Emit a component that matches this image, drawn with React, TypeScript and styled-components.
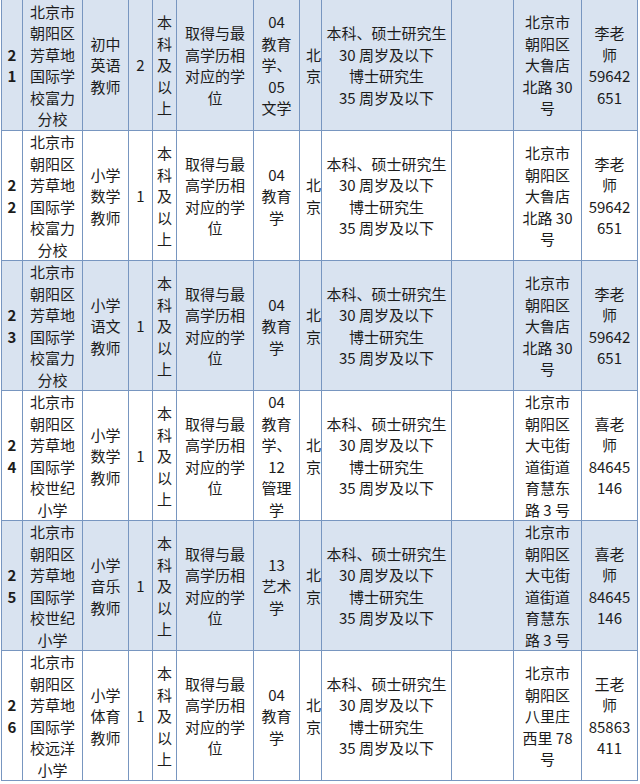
import styled, { createGlobalStyle } from 'styled-components'

const GlobalStyle = createGlobalStyle`
  html, body { margin: 0; padding: 0; background: #fff; }
  body { font-family: "Noto Sans CJK SC", "Noto Sans", sans-serif; color: #1c1c1c; }
`

const Page = styled.div`
  width: 640px;
  height: 784px;
  overflow: hidden;
  background: #fff;
`

const Table = styled.table`
  margin: -1px 0 0 1px;
  width: 637px;
  table-layout: fixed;
  border-collapse: collapse;
  font-size: 15px;
  line-height: 21.5px;
`

const Row = styled.tr<{ $shade: boolean }>`
  height: 129.3px;
  background: ${({ $shade }) => ($shade ? '#d9e3f0' : '#ffffff')};
  &:first-child { height: 131.3px; }
`

const Cell = styled.td<{ $bold?: boolean; $left?: boolean }>`
  border: 1px solid #7896c0;
  padding: 0;
  text-align: ${({ $left }) => ($left ? 'left' : 'center')};
  padding-left: ${({ $left }) => ($left ? '6px' : '0')};
  vertical-align: middle;
  font-weight: ${({ $bold }) => ($bold ? 700 : 400)};
  overflow: hidden;
  white-space: nowrap;
`

const widths = [21, 60, 46, 24, 24, 77, 46, 22, 130, 62, 68, 56]

type Item = {
  no: string
  school: string[]
  post: string[]
  count: string
  major: string[]
  address: string[]
  contact: string[]
}

const fuli = ['北京市', '朝阳区', '芳草地', '国际学', '校富力', '分校']
const shiji = ['北京市', '朝阳区', '芳草地', '国际学', '校世纪', '小学']
const yuanyang = ['北京市', '朝阳区', '芳草地', '国际学', '校远洋', '小学']
const daludian = ['北京市', '朝阳区', '大鲁店', '北路 30', '号']
const datun = ['北京市', '朝阳区', '大屯街', '道街道', '育慧东', '路 3 号']
const li = ['李老', '师', '59642', '651']
const xi = ['喜老', '师', '84645', '146']

const rows: Item[] = [
  { no: '21', school: fuli, post: ['初中', '英语', '教师'], count: '2', major: ['04', '教育', '学、', '05', '文学'], address: daludian, contact: li },
  { no: '22', school: fuli, post: ['小学', '数学', '教师'], count: '1', major: ['04', '教育', '学'], address: daludian, contact: li },
  { no: '23', school: fuli, post: ['小学', '语文', '教师'], count: '1', major: ['04', '教育', '学'], address: daludian, contact: li },
  { no: '24', school: shiji, post: ['小学', '数学', '教师'], count: '1', major: ['04', '教育', '学、', '12', '管理', '学'], address: datun, contact: xi },
  { no: '25', school: shiji, post: ['小学', '音乐', '教师'], count: '1', major: ['13', '艺术', '学'], address: datun, contact: xi },
  { no: '26', school: yuanyang, post: ['小学', '体育', '教师'], count: '1', major: ['04', '教育', '学'], address: ['北京市', '朝阳区', '八里庄', '西里 78', '号'], contact: ['王老', '师', '85863', '411'] },
]

const degree = ['本', '科', '及', '以', '上']
const diploma = ['取得与最', '高学历相', '对应的学', '位']
const age = ['本科、硕士研究生', '30 周岁及以下', '博士研究生', '35 周岁及以下']

function Lines({ items }: { items: string[] }) {
  return (
    <>
      {items.map((t, i) => (
        <div key={i}>{t}</div>
      ))}
    </>
  )
}

export default function App() {
  return (
    <Page>
      <GlobalStyle />
      <Table>
        <colgroup>
          {widths.map((w, i) => (
            <col key={i} style={{ width: w }} />
          ))}
        </colgroup>
        <tbody>
          {rows.map((r, i) => (
            <Row key={r.no} $shade={i % 2 === 0}>
              <Cell $bold><Lines items={r.no.split('')} /></Cell>
              <Cell><Lines items={r.school} /></Cell>
              <Cell><Lines items={r.post} /></Cell>
              <Cell>{r.count}</Cell>
              <Cell><Lines items={degree} /></Cell>
              <Cell><Lines items={diploma} /></Cell>
              <Cell><Lines items={r.major} /></Cell>
              <Cell $left><Lines items={['北', '京']} /></Cell>
              <Cell><Lines items={age} /></Cell>
              <Cell />
              <Cell><Lines items={r.address} /></Cell>
              <Cell><Lines items={r.contact} /></Cell>
            </Row>
          ))}
        </tbody>
      </Table>
    </Page>
  )
}
